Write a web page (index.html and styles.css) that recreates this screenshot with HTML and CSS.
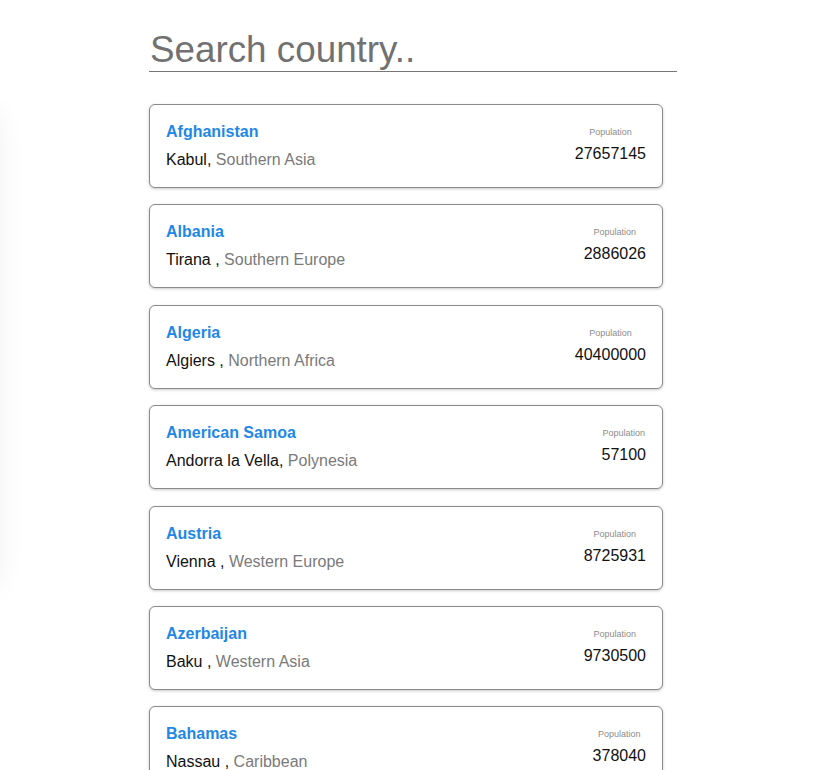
FILE: index.html
```html
<!DOCTYPE html>
<html lang="en">
<head>
<meta charset="utf-8">
<title>Countries</title>
<link rel="stylesheet" href="styles.css">
</head>
<body>
<div class="side-shadow"></div>
<main class="page">
  <input class="search" type="text" placeholder="Search country..">
  <ul class="list">
    <li class="card">
      <div class="info">
        <div class="name">Afghanistan</div>
        <div class="place">Kabul, <span class="region">Southern Asia</span></div>
      </div>
      <div class="pop"><div class="pop-label">Population</div><div class="pop-value">27657145</div></div>
    </li>
    <li class="card">
      <div class="info">
        <div class="name">Albania</div>
        <div class="place">Tirana , <span class="region">Southern Europe</span></div>
      </div>
      <div class="pop"><div class="pop-label">Population</div><div class="pop-value">2886026</div></div>
    </li>
    <li class="card">
      <div class="info">
        <div class="name">Algeria</div>
        <div class="place">Algiers , <span class="region">Northern Africa</span></div>
      </div>
      <div class="pop"><div class="pop-label">Population</div><div class="pop-value">40400000</div></div>
    </li>
    <li class="card">
      <div class="info">
        <div class="name">American Samoa</div>
        <div class="place">Andorra la Vella, <span class="region">Polynesia</span></div>
      </div>
      <div class="pop"><div class="pop-label">Population</div><div class="pop-value">57100</div></div>
    </li>
    <li class="card">
      <div class="info">
        <div class="name">Austria</div>
        <div class="place">Vienna , <span class="region">Western Europe</span></div>
      </div>
      <div class="pop"><div class="pop-label">Population</div><div class="pop-value">8725931</div></div>
    </li>
    <li class="card">
      <div class="info">
        <div class="name">Azerbaijan</div>
        <div class="place">Baku , <span class="region">Western Asia</span></div>
      </div>
      <div class="pop"><div class="pop-label">Population</div><div class="pop-value">9730500</div></div>
    </li>
    <li class="card">
      <div class="info">
        <div class="name">Bahamas</div>
        <div class="place">Nassau , <span class="region">Caribbean</span></div>
      </div>
      <div class="pop"><div class="pop-label">Population</div><div class="pop-value">378040</div></div>
    </li>
  </ul>
</main>
</body>
</html>
```
FILE: styles.css
```css
html, body {
  margin: 0;
  padding: 0;
  background: #ffffff;
  font-family: "Liberation Sans", Arial, sans-serif;
  overflow: hidden;
}

.side-shadow {
  position: fixed;
  left: -120px;
  top: 110px;
  width: 120px;
  height: 480px;
  border-radius: 20px;
  box-shadow: 0 0 30px rgba(0, 0, 0, 0.06);
}

.page {
  width: 528px;
  margin-left: 149px;
  padding-top: 24px;
}

.search {
  display: block;
  box-sizing: border-box;
  width: 528px;
  height: 48px;
  padding: 4px 0 0 1px;
  border: none;
  border-bottom: 1px solid #777777;
  outline: none;
  font-family: "Liberation Sans", Arial, sans-serif;
  font-size: 36.8px;
  color: #6f6f6f;
  background: transparent;
}

.search::placeholder {
  color: #717171;
  opacity: 1;
}

.list {
  list-style: none;
  margin: 32px 0 0 0;
  padding: 0;
  width: 514px;
  display: flex;
  flex-direction: column;
  gap: 16.4px;
}

.card {
  display: flex;
  justify-content: space-between;
  align-items: flex-start;
  border: 1px solid #8a8a8a;
  border-radius: 6px;
  box-shadow: 0 1px 3px rgba(0, 0, 0, 0.22);
  padding: 18px 16px 18px 16px;
  background: #fff;
}

.info {
  display: flex;
  flex-direction: column;
  gap: 10px;
}

.name {
  font-size: 16px;
  font-weight: bold;
  color: #1e88e5;
}

.place {
  font-size: 16px;
  color: #111111;
}

.region {
  color: #7a7a7a;
}

.pop {
  margin-top: 4px;
  text-align: center;
  display: flex;
  flex-direction: column;
  align-items: center;
  gap: 8px;
}

.pop-label {
  font-size: 9px;
  color: #8c8c8c;
}

.pop-value {
  font-size: 16px;
  color: #111111;
}
```
